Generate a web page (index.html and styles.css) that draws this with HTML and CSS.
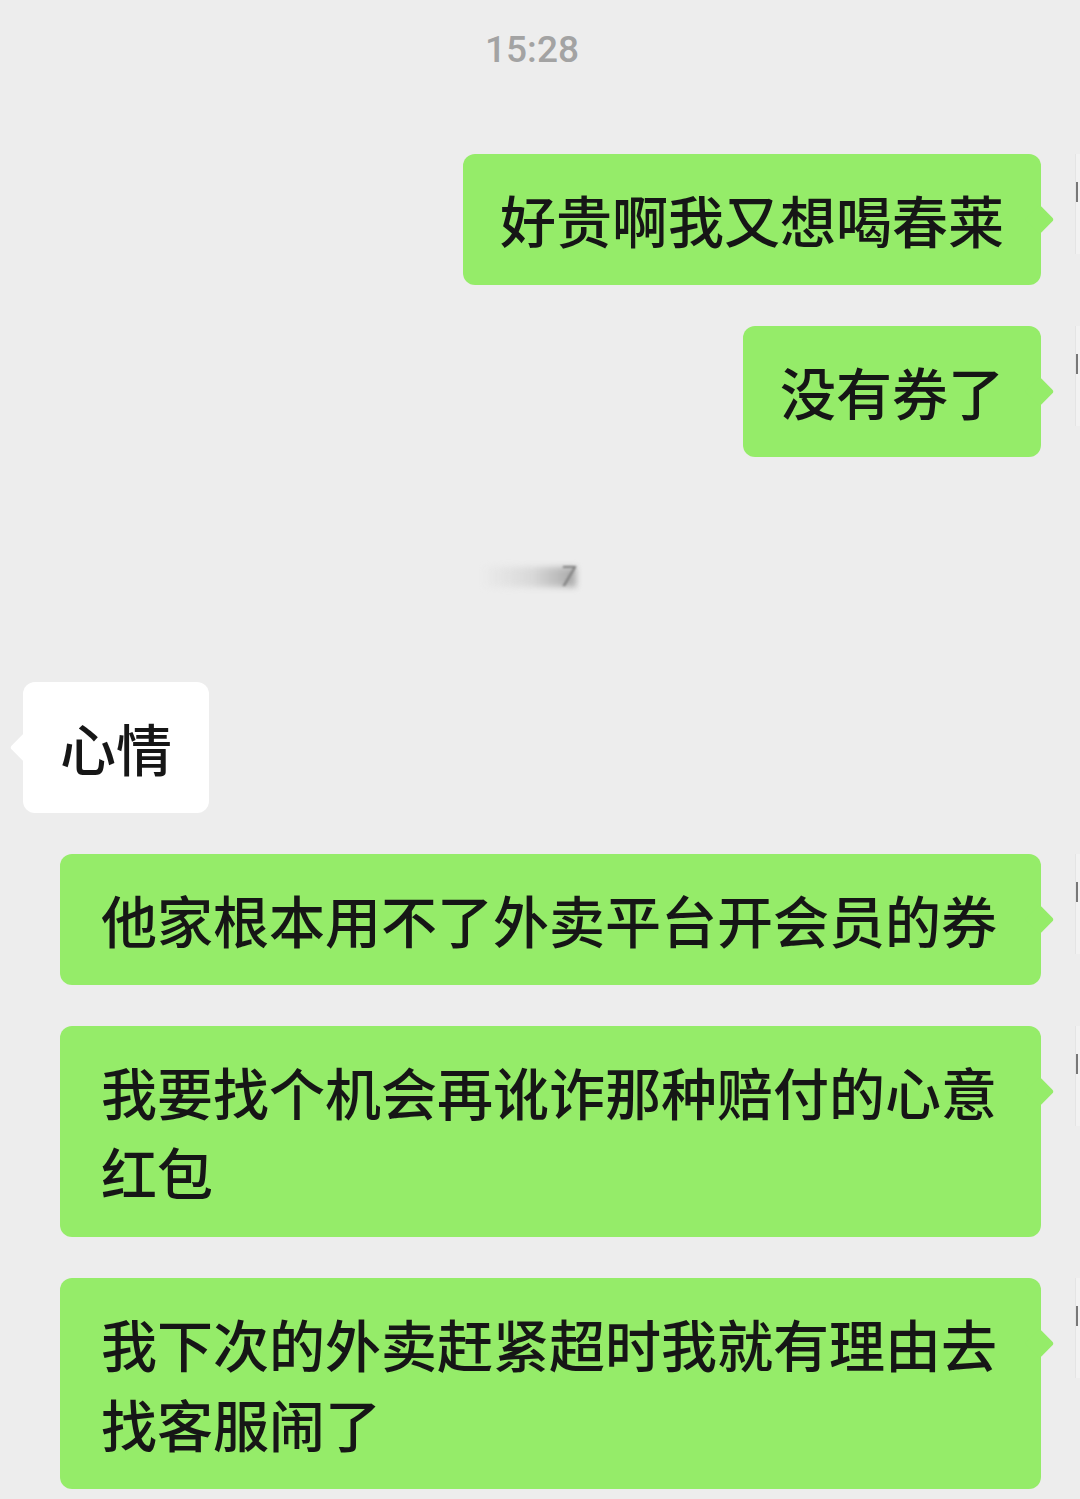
FILE: index.html
```html
<!DOCTYPE html>
<html lang="zh-CN">
<head>
    <meta charset="UTF-8">
    <meta name="viewport" content="width=device-width, initial-scale=1.0">
    <title>聊天</title>
    <link rel="stylesheet" href="styles.css">
</head>
<body>
    <div class="chat">
        <div class="time">15:28</div>

        <div class="row me">
            <div class="bubble green">好贵啊我又想喝春莱</div>
            <div class="avatar"></div>
        </div>
        <div class="row me">
            <div class="bubble green">没有券了</div>
            <div class="avatar"></div>
        </div>

        <div class="recall">
            <div class="smudge"></div>
            <span class="seven">7</span>
        </div>

        <div class="row other">
            <div class="bubble white">心情</div>
        </div>

        <div class="row me">
            <div class="bubble green wide">他家根本用不了外卖平台开会员的券</div>
            <div class="avatar"></div>
        </div>
        <div class="row me">
            <div class="bubble green wide">我要找个机会再讹诈那种赔付的心意红包</div>
            <div class="avatar"></div>
        </div>
        <div class="row me">
            <div class="bubble green wide">我下次的外卖赶紧超时我就有理由去找客服闹了</div>
            <div class="avatar"></div>
        </div>
    </div>
</body>
</html>
```

FILE: styles.css
```css
body {
  margin: 0;
  padding: 0;
  background-color: #ededed;
  font-family: "Noto Sans CJK SC", "Noto Sans", sans-serif;
  overflow: hidden;
}

.chat {
  width: 1080px;
  height: 1499px;
  overflow: hidden;
  position: relative;
}

.time {
  padding-top: 30px;
  padding-right: 16px;
  height: 40px;
  line-height: 40px;
  text-align: center;
  font-family: Roboto, "Noto Sans", sans-serif;
  font-size: 37px;
  font-weight: 500;
  color: #a3a3a3;
  margin-bottom: 84px;
}

.row {
  display: flex;
  align-items: flex-start;
  margin-bottom: 41px;
}

.row.me {
  justify-content: flex-end;
  padding-left: 60px;
}

.row.other {
  justify-content: flex-start;
  padding-left: 23px;
}

.bubble {
  position: relative;
  font-size: 56px;
  font-weight: 500;
  line-height: 80px;
  color: #161616;
  padding: 25px 37px 26px 37px;
  border-radius: 12px;
  max-width: 905px;
}

.bubble.wide {
  flex: 1;
  padding-left: 41px;
  padding-right: 41px;
}

.bubble.green {
  background-color: #95ec69;
}

.bubble.white {
  background-color: #ffffff;
}

.bubble::after {
  content: "";
  position: absolute;
  top: 55px;
  width: 21px;
  height: 21px;
  border-radius: 3px;
  transform: rotate(45deg);
}

.bubble.green::after {
  right: -9px;
  background-color: #95ec69;
}

.bubble.white::after {
  left: -9px;
  background-color: #ffffff;
}

.avatar {
  flex: none;
  width: 4px;
  height: 100px;
  margin-left: 34px;
  background-color: #f2f2f2;
  border-left: 1px solid #e4e4e4;
  position: relative;
}

.avatar::before {
  content: "";
  position: absolute;
  left: 0;
  top: 28px;
  width: 2px;
  height: 20px;
  background-color: #777777;
  filter: blur(0.6px);
}

.recall {
  height: 225px;
  display: flex;
  justify-content: center;
  align-items: center;
  margin-top: -41px;
  padding-right: 24px;
  padding-top: 14px;
  box-sizing: border-box;
}

.smudge {
  width: 96px;
  height: 20px;
  background: linear-gradient(to right, rgba(220, 220, 220, 0) 0, #d8d8d8 55%, #a8a8a8 100%);
  filter: blur(3px);
}

.seven {
  font-family: Roboto, sans-serif;
  font-size: 28px;
  font-style: italic;
  color: #808080;
  margin-left: -16px;
  filter: blur(0.8px);
}
```
